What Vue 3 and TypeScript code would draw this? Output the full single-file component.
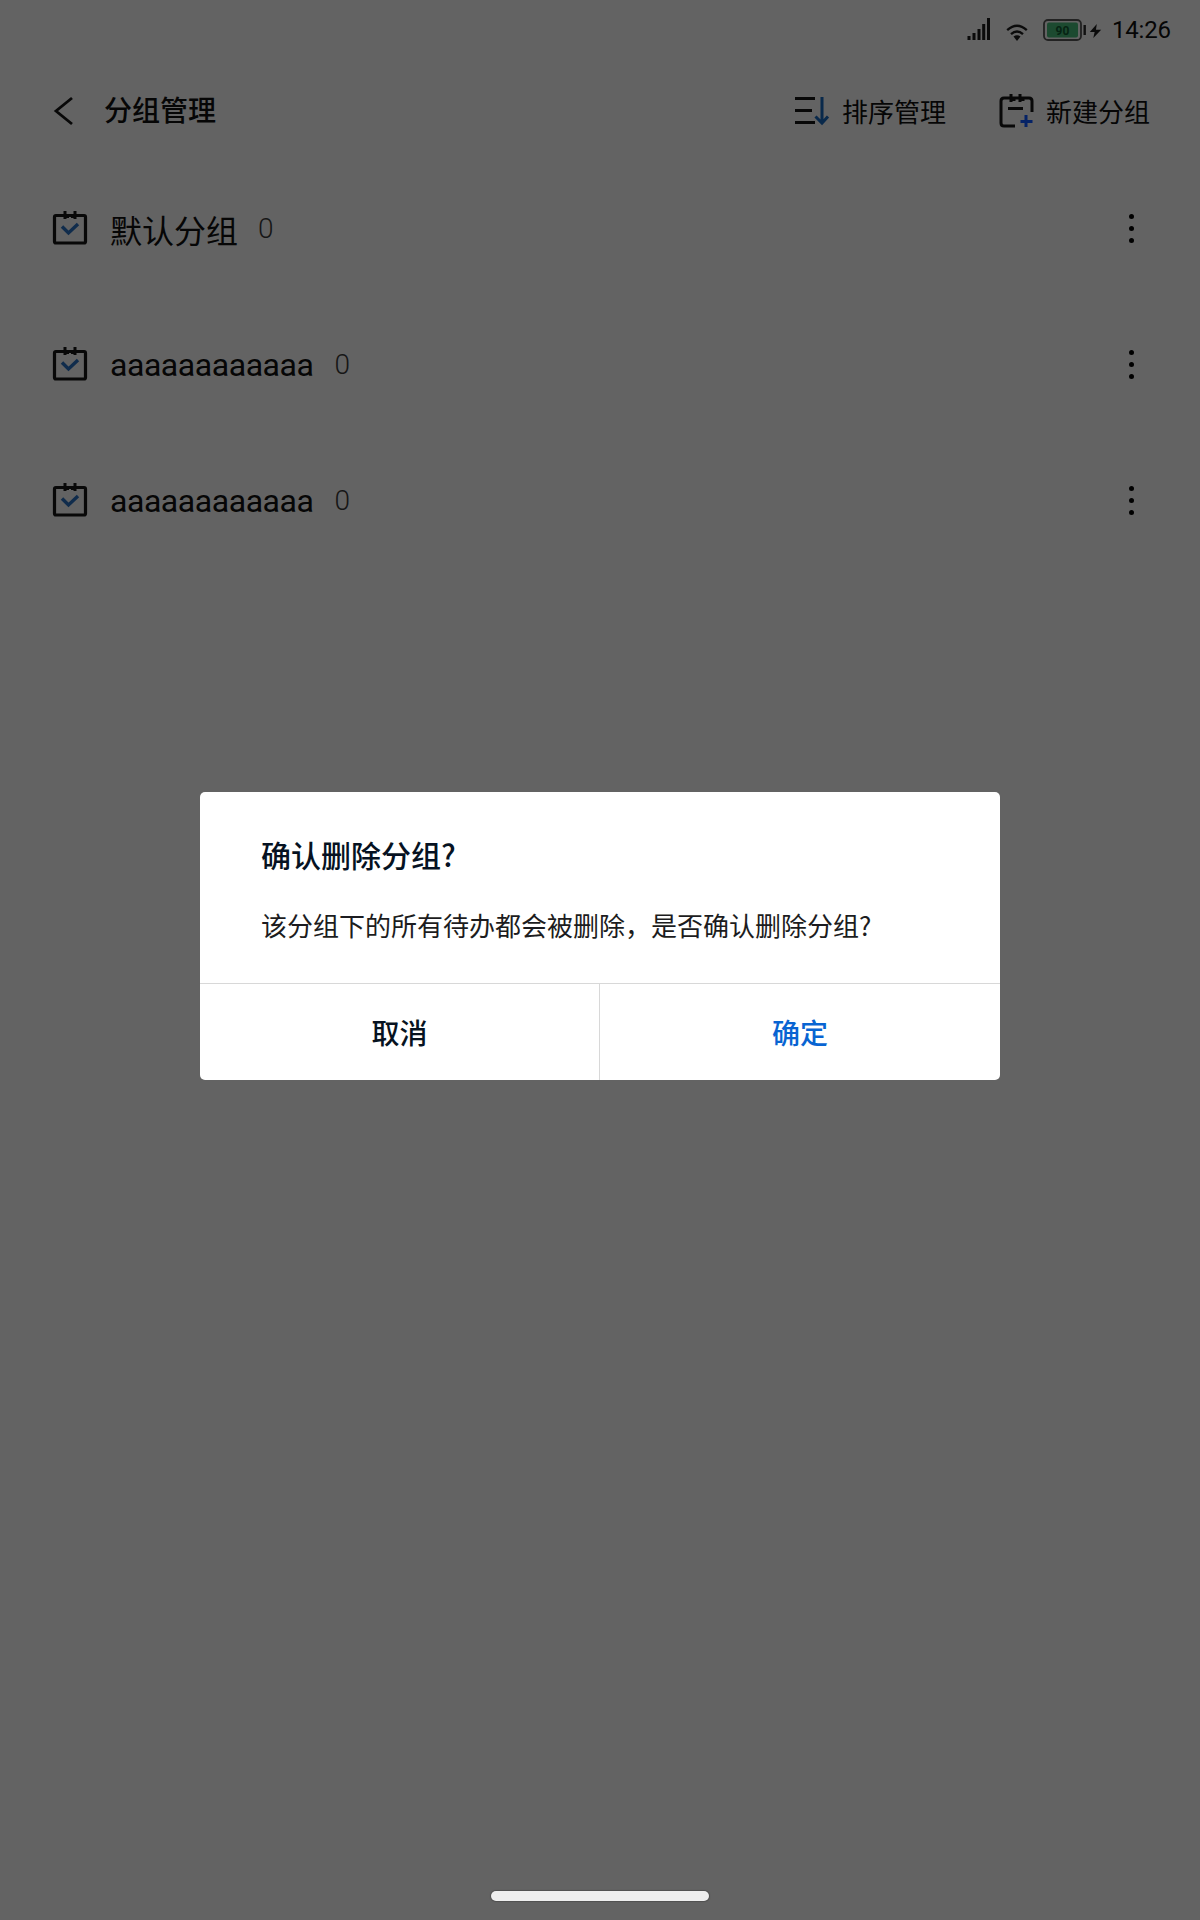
<script setup lang="ts">
interface Group {
  id: number
  name: string
  count: number
  latin: boolean
}

const groups: Group[] = [
  { id: 1, name: '默认分组', count: 0, latin: false },
  { id: 2, name: 'aaaaaaaaaaaa', count: 0, latin: true },
  { id: 3, name: 'aaaaaaaaaaaa', count: 0, latin: true },
]
</script>

<template>
  <div class="screen">
    <div class="status">
      <svg class="signal" width="24" height="24" viewBox="0 0 24 24">
        <path d="M2 23v-4M7 23v-7M12 23V12M16.7 23V7M21.5 23V1" stroke="#0b0b0b" stroke-width="3" fill="none" />
      </svg>
      <svg class="wifi" width="22" height="18" viewBox="0 0 22 18" fill="none" stroke="#0b0b0b" stroke-width="2.3">
        <path d="M1.2 6.2Q11-2.8 20.8 6.2M5 10.2Q11 4.8 17 10.2" />
        <path d="M7.5 12.5Q11 9.8 14.5 12.5L11 17Z" fill="#0b0b0b" stroke="none" />
      </svg>
      <svg class="battery" width="44" height="24" viewBox="0 0 44 24">
        <rect x="1" y="2" width="37" height="20" rx="4" fill="none" stroke="#222" stroke-width="1.8" />
        <rect x="4" y="4.5" width="31" height="15" rx="2" fill="#1c4a30" />
        <text x="19.5" y="17" text-anchor="middle" class="level">90</text>
        <path d="M41.7 7v10" stroke="#111" stroke-width="2.4" />
      </svg>
      <svg class="bolt" width="13" height="14" viewBox="0 0 13 16">
        <path d="M8 0L0 9h5.5L4 16l9-9.5H7Z" fill="#0b0b0b" />
      </svg>
      <span class="time">14:26</span>
    </div>

    <header class="bar">
      <svg class="back" width="22" height="30" viewBox="0 0 22 30">
        <path d="M19 2L3 15L19 28" fill="none" stroke="#080808" stroke-width="2.8" />
      </svg>
      <h1>分组管理</h1>
      <div class="action sort">
        <svg width="36" height="32" viewBox="0 0 36 32" fill="none" stroke-width="3">
          <path d="M1 3.5h20M1 15.5h17M1 27.5h20" stroke="#080808" />
          <path d="M28 2v25M21.5 21.5L28 28L34 21.5" stroke="#09294b" />
        </svg>
        <span>排序管理</span>
      </div>
      <div class="action">
        <svg width="36" height="36" viewBox="0 0 36 36" fill="none" stroke-width="3">
          <path d="M16 33H5Q2 33 2 30V8Q2 5 5 5h25Q33 5 33 8v11M9 15.5h15M12 1v8M15 5v3M21 1v8M24 5v3" stroke="#080808" />
          <path d="M27 22v12M21.5 28.5h12" stroke="#062366" />
        </svg>
        <span>新建分组</span>
      </div>
    </header>

    <main>
      <div v-for="group in groups" :key="group.id" class="row">
        <svg class="todo" width="36" height="36" viewBox="0 0 36 36" fill="none">
          <rect x="2.5" y="5.5" width="31" height="27.5" rx="1.5" stroke="#080808" stroke-width="3.2" />
          <path d="M13 1v8M23 1v8M15.5 4v4M20.5 4v4" stroke="#080808" stroke-width="3" />
          <path d="M10 16.5L16.5 23L26 14" stroke="#102c4c" stroke-width="3.4" />
        </svg>
        <span class="name" :class="{ latin: group.latin }">{{ group.name }}</span>
        <span class="count">{{ group.count }}</span>
        <span class="more"><i></i><i></i><i></i></span>
      </div>
    </main>

    <div class="dialog" role="dialog">
      <div class="content">
        <h2>确认删除分组?</h2>
        <p>该分组下的所有待办都会被删除，是否确认删除分组?</p>
      </div>
      <div class="buttons">
        <button>取消</button>
        <button class="ok">确定</button>
      </div>
    </div>
    <div class="home"></div>
  </div>
</template>

<style>
body {
  margin: 0;
  background: #636363;
}
</style>

<style scoped>
.screen {
  position: relative;
  width: 1200px;
  height: 1920px;
  overflow: hidden;
  background: #636363;
  color: #060606;
  font-family: Roboto, "Noto Sans CJK SC", sans-serif;
}
.status {
  display: flex;
  align-items: center;
  height: 60px;
  padding-left: 967px;
}
.signal { margin-top: -3px; }
.wifi { margin: 5px 0 0 15px; }
.battery { margin-left: 15px; }
.level { font: 700 12px Roboto, sans-serif; fill: #062313; }
.bolt { margin: 2px 0 0 2px; }
.time { margin-left: 10px; font-size: 24px; letter-spacing: -0.2px; }
.bar {
  display: flex;
  align-items: center;
  height: 102px;
  box-sizing: border-box;
  padding: 0 50px 0 53px;
}
.bar h1 {
  margin: 2px auto 0 29px;
  font-size: 28px;
  font-weight: 500;
  line-height: 40px;
}
.action {
  display: flex;
  align-items: center;
  gap: 11px;
  font-size: 26px;
}
.action span { margin-top: -1px; }
.sort { margin-right: 53px; }
.sort svg { margin-right: 1px; }
.row {
  display: flex;
  align-items: center;
  height: 136px;
  box-sizing: border-box;
  padding: 0 66px 3px 52px;
}
.todo { margin-top: -1px; }
.name {
  margin-left: 22px;
  font-size: 32px;
}
.latin { letter-spacing: -0.45px; }
.count {
  margin-left: 20px;
  font-size: 28px;
  font-weight: 300;
  color: #161616;
}
.latin + .count { margin-left: 21px; }
.more {
  display: flex;
  flex-direction: column;
  gap: 7px;
  margin-left: auto;
}
.more i {
  width: 5px;
  height: 5px;
  border-radius: 50%;
  background: #000;
}
.dialog {
  position: absolute;
  top: 792px;
  left: 200px;
  display: flex;
  flex-direction: column;
  width: 800px;
  height: 288px;
  overflow: hidden;
  border-radius: 5px;
  background: #fff;
  font-family: "Noto Sans CJK SC", sans-serif;
}
.content {
  height: 191px;
  box-sizing: border-box;
  padding: 40px 61px 0;
}
h2 {
  margin: 0;
  font-size: 30px;
  font-weight: 500;
  line-height: 44px;
  color: #061222;
}
p {
  margin: 29px 0 0;
  font-size: 26px;
  line-height: 40px;
  color: #1c1c20;
}
.buttons {
  display: grid;
  grid-template-columns: 399px 401px;
  flex: 1;
  border-top: 1px solid #d8d8d8;
}
button {
  padding: 0;
  border: 0;
  background: none;
  font: 500 28px Roboto, "Noto Sans CJK SC", sans-serif;
  color: #071321;
}
.ok {
  border-left: 1px solid #d8d8d8;
  color: #0864d2;
}
.home {
  position: absolute;
  top: 1891px;
  left: 491px;
  width: 218px;
  height: 10px;
  border-radius: 5px;
  background: #eee;
  box-shadow: 0 0 1px 1px #505050;
}
</style>
